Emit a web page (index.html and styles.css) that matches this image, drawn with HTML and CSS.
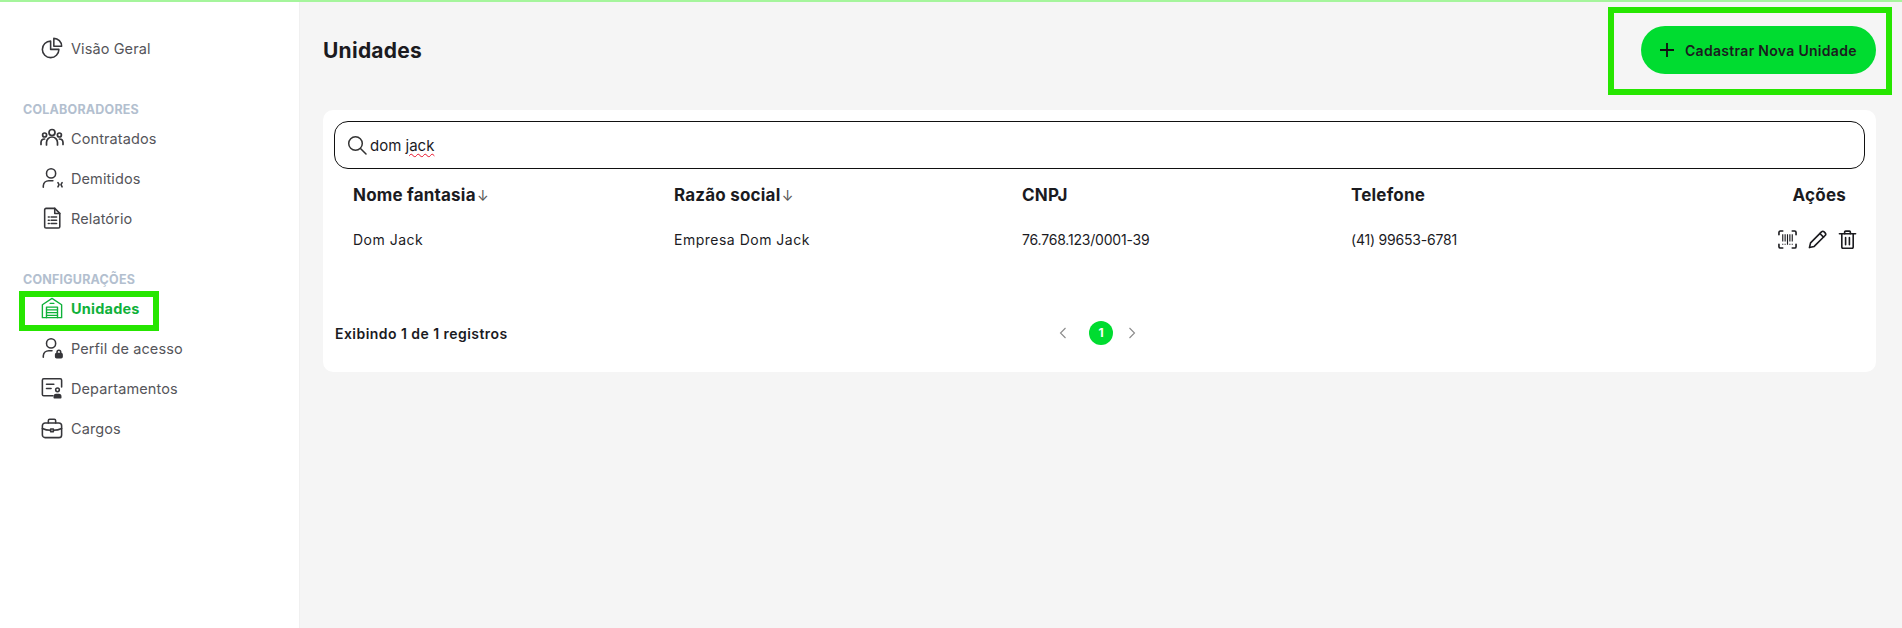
FILE: index.html
```html
<!DOCTYPE html>
<html lang="pt-BR">
<head>
  <meta charset="UTF-8" />
  <title>Unidades</title>
  <link rel="stylesheet" href="styles.css">
</head>
<body>
  <div class="top-line"></div>
  <div class="app">
    <!-- Sidebar -->
    <aside class="sidebar">
      <a class="nav-item nav-first">
        <svg class="nav-icon" viewBox="0 0 24 24"><path d="M10.500 4.500a9 9 0 1 0 9 9h-9z"/><path d="M14 1.500v8.500h8.500A8.500 8.500 0 0 0 14 1.500z"/></svg>
        <span>Visão Geral</span>
      </a>

      <div class="nav-label">COLABORADORES</div>
      <a class="nav-item">
        <svg class="nav-icon nav-icon-wide" viewBox="0 0 24 24"><circle cx="12" cy="6.500" r="3"/><circle cx="4.600" cy="9" r="2"/><circle cx="19.400" cy="9" r="2"/><path d="M6.500 19v-2.500a5.500 5.500 0 0 1 11 0V19"/><path d="M1 18.500v-2a3.600 3.600 0 0 1 3.600-3.500"/><path d="M23 18.500v-2a3.600 3.600 0 0 0-3.600-3.500"/></svg>
        <span>Contratados</span>
      </a>
      <a class="nav-item">
        <svg class="nav-icon" viewBox="0 0 24 24"><circle cx="11" cy="7" r="5"/><path d="M2.500 22v-1.500a6 6 0 0 1 6-5.500h4.500"/><path d="M18.500 17l1.200 2.200-1.200 2.500M23 17l-1.200 2.200 1.200 2.500"/></svg>
        <span>Demitidos</span>
      </a>
      <a class="nav-item">
        <svg class="nav-icon" viewBox="0 0 24 24"><path d="M5.500 1.500h9.500l5.500 5.500v14.500a1.500 1.500 0 0 1-1.500 1.500H5.500A1.500 1.500 0 0 1 4 21.500V3A1.500 1.500 0 0 1 5.500 1.500z"/><path d="M15 1.500V7h5.500"/><path d="M8 11h1M11 11h6M8 14.500h1M11 14.500h6M8 18h1M11 18h6"/></svg>
        <span>Relatório</span>
      </a>

      <div class="nav-label">CONFIGURAÇÕES</div>
      <a class="nav-item nav-active">
        <svg class="nav-icon" viewBox="0 0 24 24"><path d="M1.500 22.500V8.500L12 1.500l10.500 7v14z"/><path d="M6 22.500V11h12v11.500"/><path d="M6 14h12M6 17h12M6 20h12"/><path d="M10 7h4"/></svg>
        <span>Unidades</span>
      </a>
      <a class="nav-item">
        <svg class="nav-icon" viewBox="0 0 24 24"><circle cx="11" cy="7" r="5"/><path d="M2.500 22v-1.500a6 6 0 0 1 6-5.500h3.500"/><rect class="solid" x="16" y="18" width="7" height="4.500" rx="1"/><path d="M17.500 18v-1.500a2 2 0 0 1 4 0V18"/></svg>
        <span>Perfil de acesso</span>
      </a>
      <a class="nav-item">
        <svg class="nav-icon" viewBox="0 0 24 24"><path d="M13 20.500H3A1.500 1.500 0 0 1 1.500 19V3.500A1.500 1.500 0 0 1 3 2h18a1.500 1.500 0 0 1 1.500 1.500V11"/><path d="M6 8h8M6 12.500h5"/><circle cx="18" cy="14" r="2"/><path class="solid" d="M14.500 22.500v-1.500a2 2 0 0 1 2-2h3a2 2 0 0 1 2 2v1.500z"/></svg>
        <span>Departamentos</span>
      </a>
      <a class="nav-item">
        <svg class="nav-icon" viewBox="0 0 24 24"><rect x="1.500" y="6.500" width="21" height="16" rx="3"/><path d="M8 6.500V4A1.500 1.500 0 0 1 9.500 2.500h5A1.500 1.500 0 0 1 16 4v2.500"/><path d="M1.500 12.500c3 1.500 6 2 9 2M13.500 14.500c3 0 6-.5 9-2"/><rect x="10.500" y="13" width="3" height="3"/></svg>
        <span>Cargos</span>
      </a>
      <div class="mark mark-nav"></div>
    </aside>

    <!-- Main content -->
    <main class="content">
      <div class="page-head">
        <h1>Unidades</h1>
        <button class="btn-new">
          <svg viewBox="0 0 16 16"><path d="M8 1v14M1 8h14"/></svg>
          Cadastrar Nova Unidade
        </button>
      </div>
      <div class="mark mark-btn"></div>

      <section class="card">
        <div class="search">
          <svg viewBox="0 0 20 20"><circle cx="8.500" cy="8.500" r="6.800"/><path d="M13.500 13.500L19 19"/></svg>
          <span>dom <span class="typo">jack</span></span>
        </div>

        <div class="row row-head">
          <div>Nome fantasia <span class="sort">↓</span></div>
          <div>Razão social <span class="sort">↓</span></div>
          <div>CNPJ</div>
          <div>Telefone</div>
          <div class="col-actions">Ações</div>
        </div>
        <div class="row row-body">
          <div class="cell-text">Dom Jack</div>
          <div class="cell-text">Empresa Dom Jack</div>
          <div class="cell-num">76.768.123/0001-39</div>
          <div class="cell-num">(41) 99653-6781</div>
          <div class="icons">
            <svg viewBox="0 0 20 20"><path d="M1 5V2.500A1.500 1.500 0 0 1 2.500 1H5M15 1h2.500A1.500 1.500 0 0 1 19 2.500V5M19 15v2.500a1.500 1.500 0 0 1-1.500 1.500H15M5 19H2.500A1.500 1.500 0 0 1 1 17.500V15"/><path class="bars" d="M5 4.500v7.500M7.500 4.500v7.500M10 4.500v11M12.500 4.500v7.500M15 4.500v7.500M5 14.500v1M7.500 14.500v1M12.500 14.500v1M15 14.500v1"/></svg>
            <svg viewBox="0 0 20 20"><path d="M1.500 18.500l1.200-5L14.200 2a2 2 0 0 1 2.800 0l1 1a2 2 0 0 1 0 2.800L6.500 17.300z"/><path d="M12.500 3.700l3.800 3.800"/></svg>
            <svg viewBox="0 0 20 20"><path d="M1.500 4h17"/><path d="M7 4V2.200A1 1 0 0 1 8 1.200h4a1 1 0 0 1 1 1V4"/><path d="M4 4v14a1.300 1.300 0 0 0 1.300 1.300h9.400A1.300 1.300 0 0 0 16 18V4"/><path d="M8 8v7.500M12 8v7.500"/></svg>
          </div>
        </div>

        <div class="card-foot">
          <div class="count">Exibindo 1 de 1 registros</div>
          <div class="pager">
            <svg viewBox="0 0 8 12"><path d="M6.500 1L1.500 6l5 5"/></svg>
            <span class="page-num">1</span>
            <svg viewBox="0 0 8 12"><path d="M1.500 1l5 5-5 5"/></svg>
          </div>
        </div>
      </section>
    </main>
  </div>
</body>
</html>
```

FILE: styles.css
```css
/* Base */
* { box-sizing: border-box; margin: 0; padding: 0; }
html, body { height: 100%; overflow: hidden; }
body {
  font-family: 'Inter', 'Liberation Sans', sans-serif;
  background: #f5f5f5;
  color: #1b1b1f;
}
.top-line { height: 2px; background: #a5f59c; }
.app { display: flex; height: 626px; }

/* Sidebar */
.sidebar {
  position: relative;
  width: 300px;
  flex-shrink: 0;
  background: #fff;
  border-right: 1px solid #f0f0f0;
  padding: 26px 0 0 23px;
}
.nav-item {
  display: flex;
  align-items: center;
  gap: 8px;
  height: 40px;
  padding-left: 17px;
  font-size: 14.500px;
  letter-spacing: 0.1px;
  color: #55555a;
}
.nav-first { margin-bottom: 34px; }
.nav-icon {
  width: 22px;
  height: 22px;
  margin-left: 1px;
  flex-shrink: 0;
  fill: none;
  stroke: #36363a;
  stroke-width: 1.700;
  stroke-linecap: round;
  stroke-linejoin: round;
}
.nav-icon .solid { fill: #36363a; }
.nav-icon-wide { width: 24px; height: 24px; margin-left: 0; margin-right: -1px; }
.nav-label {
  height: 16px;
  font-size: 12.500px;
  font-weight: 700;
  line-height: 16px;
  letter-spacing: 0.2px;
  color: #b3bfcf;
}
.nav-item + .nav-label { margin-top: 34px; }
.nav-active { color: #0fb13a; font-weight: 700; letter-spacing: 0.2px; }
.nav-active .nav-icon { stroke: #0fb13a; stroke-width: 1.500; }

/* Green annotation boxes */
.mark {
  position: absolute;
  border: 6px solid #26e600;
  pointer-events: none;
}
.mark-nav { left: 19px; top: 289px; width: 140px; height: 40px; }
.mark-btn { left: 1308px; top: 5px; width: 284px; height: 88px; }

/* Main */
.content { position: relative; flex: 1; padding: 24px 26px 0 23px; }
.page-head {
  display: flex;
  align-items: center;
  justify-content: space-between;
  height: 48px;
  margin-bottom: 36px;
}
h1 { font-size: 21px; font-weight: 700; letter-spacing: 0.25px; }
.btn-new {
  display: flex;
  align-items: center;
  gap: 10px;
  height: 48px;
  width: 235px;
  padding-left: 18px;
  border: none;
  border-radius: 24px;
  background: #00dc30;
  color: #1b1b1f;
  font-family: inherit;
  font-size: 14px;
  font-weight: 600;
  letter-spacing: 0.3px;
  white-space: nowrap;
}
.btn-new svg { width: 16px; height: 16px; fill: none; stroke: #111; stroke-width: 1.800; }

/* Card */
.card {
  height: 262px;
  padding: 11px;
  background: #fff;
  border-radius: 10px;
}
.search {
  display: flex;
  align-items: center;
  gap: 3px;
  height: 48px;
  padding-left: 12px;
  border: 1.500px solid #111;
  border-radius: 14px;
  font-size: 15px;
}
.search svg { width: 20px; height: 20px; fill: none; stroke: #333; stroke-width: 1.500; stroke-linecap: round; }
.typo { text-decoration: underline wavy #e8142c 1px; text-underline-offset: 2px; }

.row {
  display: grid;
  grid-template-columns: 321px 348px 329px 1fr 120px;
  align-items: center;
  padding: 0 19px;
}
.row-head { height: 51px; font-size: 17px; font-weight: 700; letter-spacing: 0.2px; }
.sort { margin-left: -3px; font-weight: 400; font-size: 14px; color: #555; }
.row-body { height: 38px; font-size: 14px; }
.cell-text { letter-spacing: 0.5px; }
.cell-num { letter-spacing: -0.2px; }
.col-actions { text-align: right; }
.icons { display: flex; justify-content: flex-end; gap: 11px; margin-right: -11px; }
.icons svg {
  width: 19px;
  height: 19px;
  fill: none;
  stroke: #1b1b1f;
  stroke-width: 1.700;
  stroke-linecap: round;
  stroke-linejoin: round;
}
.icons .bars { stroke-width: 1.200; stroke-linecap: butt; }

.card-foot {
  display: grid;
  grid-template-columns: 1fr 1fr 1fr;
  align-items: center;
  height: 50px;
  margin-top: 50px;
  padding-left: 1px;
}
.count { font-size: 14px; font-weight: 600; letter-spacing: 0.45px; }
.pager {
  display: flex;
  align-items: center;
  padding-left: 214px;
}
.pager svg { width: 8px; height: 12px; fill: none; stroke: #8a8a8a; stroke-width: 1.100; }
.page-num {
  width: 24px;
  height: 24px;
  margin: 0 15px 0 22px;
  border-radius: 50%;
  background: #00dc30;
  color: #fff;
  font-size: 12px;
  font-weight: 700;
  line-height: 24px;
  text-align: center;
}
```
